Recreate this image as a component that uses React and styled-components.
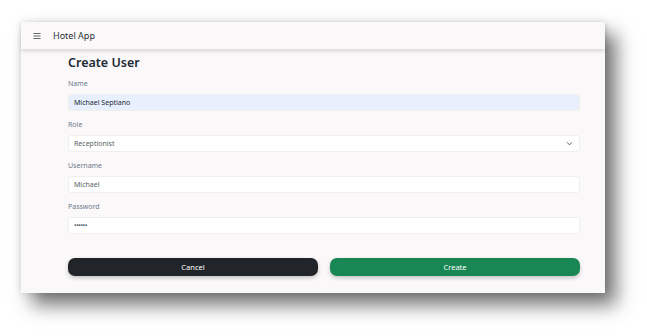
import React from "react";
import styled, { createGlobalStyle } from "styled-components";

const GlobalStyle = createGlobalStyle`
  html, body {
    margin: 0;
    padding: 0;
    background: #ffffff;
  }
  body {
    font-family: "Noto Sans", "Open Sans", sans-serif;
  }
`;

const Page = styled.div`
  width: 647px;
  height: 336px;
  padding: 22px 0 0 21px;
  box-sizing: border-box;
`;

const Window = styled.div`
  width: 584px;
  height: 271px;
  background: #faf8f8;
  display: flex;
  flex-direction: column;
  box-shadow: 11px 12px 18px rgba(0, 0, 0, 0.55), 0 0 8px rgba(0, 0, 0, 0.12);
`;

const TopBar = styled.header`
  height: 27px;
  display: flex;
  align-items: center;
  gap: 12px;
  padding-left: 12px;
  background: #faf8f8;
  box-shadow: 0 2px 4px rgba(0, 0, 0, 0.14);
  position: relative;
  z-index: 1;
`;

const Burger = styled.svg`
  width: 8px;
  height: 8px;
  color: #444;
`;

const Brand = styled.span`
  font-size: 9px;
  color: #2b2f36;
`;

const Content = styled.main`
  padding: 6px 25px 0 47px;
  display: flex;
  flex-direction: column;
`;

const Title = styled.h1`
  margin: 0 0 8px;
  font-size: 12.5px;
  line-height: 16px;
  font-weight: 600;
  color: #212a36;
`;

const Field = styled.div`
  display: flex;
  flex-direction: column;
  gap: 5px;
  margin-bottom: 9px;
`;

const Label = styled.label`
  font-size: 7px;
  line-height: 10px;
  color: #6f7b8e;
`;

const Input = styled.input`
  height: 17px;
  box-sizing: border-box;
  border: 1px solid #f1eeee;
  border-radius: 3px;
  padding: 0 5px;
  font-family: inherit;
  font-size: 7px;
  color: ${(p) => (p.$autofill ? "#222831" : "#5a5f66")};
  background: ${(p) => (p.$autofill ? "#e8f0fe" : "#ffffff")};
  outline: none;
  letter-spacing: ${(p) => (p.type === "password" ? "-0.5px" : "normal")};
`;

const SelectBox = styled.div`
  height: 17px;
  box-sizing: border-box;
  border: 1px solid #f1eeee;
  border-radius: 3px;
  padding: 0 6px 0 5px;
  display: flex;
  align-items: center;
  justify-content: space-between;
  background: #ffffff;
  font-size: 7px;
  color: #5a5f66;
`;

const Chevron = styled.svg`
  width: 7px;
  height: 7px;
  color: #444;
`;

const Actions = styled.div`
  display: grid;
  grid-template-columns: 1fr 1fr;
  gap: 12px;
  margin-top: 15px;
`;

const Button = styled.button`
  height: 18px;
  border: none;
  border-radius: 7px;
  font-family: inherit;
  font-size: 7.5px;
  color: #ffffff;
  background: ${(p) => (p.$variant === "success" ? "#198754" : "#212529")};
  box-shadow: 0 2px 4px rgba(0, 0, 0, 0.22);
  cursor: pointer;
`;

export default function App() {
  return (
    <Page>
      <GlobalStyle />
      <Window>
        <TopBar>
          <Burger viewBox="0 0 16 16" fill="none" stroke="currentColor" strokeWidth="1.6">
            <path d="M1 3h14M1 8h14M1 13h14" />
          </Burger>
          <Brand>Hotel App</Brand>
        </TopBar>
        <Content>
          <Title>Create User</Title>
          <Field>
            <Label>Name</Label>
            <Input $autofill readOnly value="Michael Septiano" />
          </Field>
          <Field>
            <Label>Role</Label>
            <SelectBox>
              <span>Receptionist</span>
              <Chevron viewBox="0 0 16 16" fill="none" stroke="currentColor" strokeWidth="2" strokeLinecap="round" strokeLinejoin="round">
                <path d="M3 6l5 5 5-5" />
              </Chevron>
            </SelectBox>
          </Field>
          <Field>
            <Label>Username</Label>
            <Input readOnly value="Michael" />
          </Field>
          <Field>
            <Label>Password</Label>
            <Input type="password" readOnly value="secret" />
          </Field>
          <Actions>
            <Button>Cancel</Button>
            <Button $variant="success">Create</Button>
          </Actions>
        </Content>
      </Window>
    </Page>
  );
}
